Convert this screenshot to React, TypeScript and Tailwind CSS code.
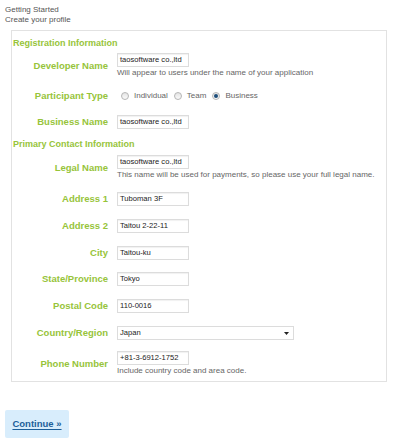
import React from "react";

const font = { fontFamily: '"Liberation Sans", Arial, sans-serif' };

function Label({ children }: { children: React.ReactNode }) {
    return (
        <div className="w-[96px] shrink-0 text-right text-[9.5px] leading-[14px] font-bold text-[#97c43a] whitespace-nowrap">
            {children}
        </div>
    );
}

function TextInput({ value, wide }: { value: string; wide?: boolean }) {
    return (
        <div
            className={`${wide ? "w-[177px]" : "w-[72px]"} h-[14px] overflow-hidden whitespace-nowrap border border-[#dcdcdc] bg-white pl-[2px] text-[7.6px] leading-[12px] text-[#222] shadow-[inset_0_1px_1px_rgba(0,0,0,0.06)]`}
        >
            {value}
        </div>
    );
}

function Help({ children }: { children: React.ReactNode }) {
    return <div className="text-[8px] leading-[11px] text-[#666] whitespace-nowrap">{children}</div>;
}

function Row({ label, children, className }: { label: string; children: React.ReactNode; className: string }) {
    return (
        <div className={`flex items-center gap-[9px] ${className}`}>
            <Label>{label}</Label>
            <div>{children}</div>
        </div>
    );
}

function Radio({ checked, label }: { checked?: boolean; label: string }) {
    return (
        <span className="flex items-center gap-[5px]">
            <span className="flex h-[8px] w-[8px] items-center justify-center rounded-full border border-[#b5b5b5] bg-gradient-to-b from-[#e4e4e4] to-[#fafafa]">
                {checked && <span className="h-[4px] w-[4px] rounded-full bg-[#1d4d7a]" />}
            </span>
            <span className="text-[8px] leading-[14px] text-[#666]">{label}</span>
        </span>
    );
}

function SectionTitle({ children, className }: { children: React.ReactNode; className: string }) {
    return (
        <div className={`pl-[1px] text-[9px] leading-[14px] font-bold text-[#97c43a] ${className}`}>
            {children}
        </div>
    );
}

export default function App() {
    return (
        <div style={font} className="w-[400px] h-[444px] bg-white pl-[5px] pt-[5px]">
            <div className="text-[8px] leading-[10px] text-[#555]">Getting Started</div>
            <div className="text-[8px] leading-[10px] text-[#555]">Create your profile</div>

            <div className="mt-[5px] ml-[6px] w-[376px] border border-[#e2e2e2] pb-[5px]">
                <SectionTitle className="mt-[5px]">Registration Information</SectionTitle>

                <Row label="Developer Name" className="mt-[3px]">
                    <TextInput value="taosoftware co.,ltd" />
                    <Help>Will appear to users under the name of your application</Help>
                </Row>

                <Row label="Participant Type" className="mt-[11px]">
                    <div className="flex items-center gap-[6px] pl-[4px]">
                        <Radio label="Individual" />
                        <Radio label="Team" />
                        <Radio label="Business" checked />
                    </div>
                </Row>

                <Row label="Business Name" className="mt-[12px]">
                    <TextInput value="taosoftware co.,ltd" />
                </Row>

                <SectionTitle className="mt-[8px]">Primary Contact Information</SectionTitle>

                <Row label="Legal Name" className="mt-[4px]">
                    <TextInput value="taosoftware co.,ltd" />
                    <Help>This name will be used for payments, so please use your full legal name.</Help>
                </Row>

                <Row label="Address 1" className="mt-[12px]">
                    <TextInput value="Tuboman 3F" />
                </Row>
                <Row label="Address 2" className="mt-[13px]">
                    <TextInput value="Taitou 2-22-11" />
                </Row>
                <Row label="City" className="mt-[13px]">
                    <TextInput value="Taitou-ku" />
                </Row>
                <Row label="State/Province" className="mt-[12px]">
                    <TextInput value="Tokyo" />
                </Row>
                <Row label="Postal Code" className="mt-[13px]">
                    <TextInput value="110-0016" />
                </Row>
                <Row label="Country/Region" className="mt-[13px]">
                    <div className="flex w-[177px] h-[14px] items-center justify-between border border-[#dcdcdc] bg-white pl-[2px] pr-[4px] text-[7.6px] leading-[12px] text-[#222]">
                        <span>Japan</span>
                        <svg width="5" height="3" viewBox="0 0 5 3">
                            <path d="M0 0h5L2.5 3z" fill="#222" />
                        </svg>
                    </div>
                </Row>
                <Row label="Phone Number" className="mt-[11px]">
                    <TextInput value="+81-3-6912-1752" />
                    <Help>Include country code and area code.</Help>
                </Row>
            </div>

            <div className="mt-[28px] flex h-[28px] w-[64px] items-center justify-center rounded-[2px] bg-[#d8edfc]">
                <span className="text-[9.5px] font-bold text-[#1d5f99] underline underline-offset-2">Continue »</span>
            </div>
        </div>
    );
}
